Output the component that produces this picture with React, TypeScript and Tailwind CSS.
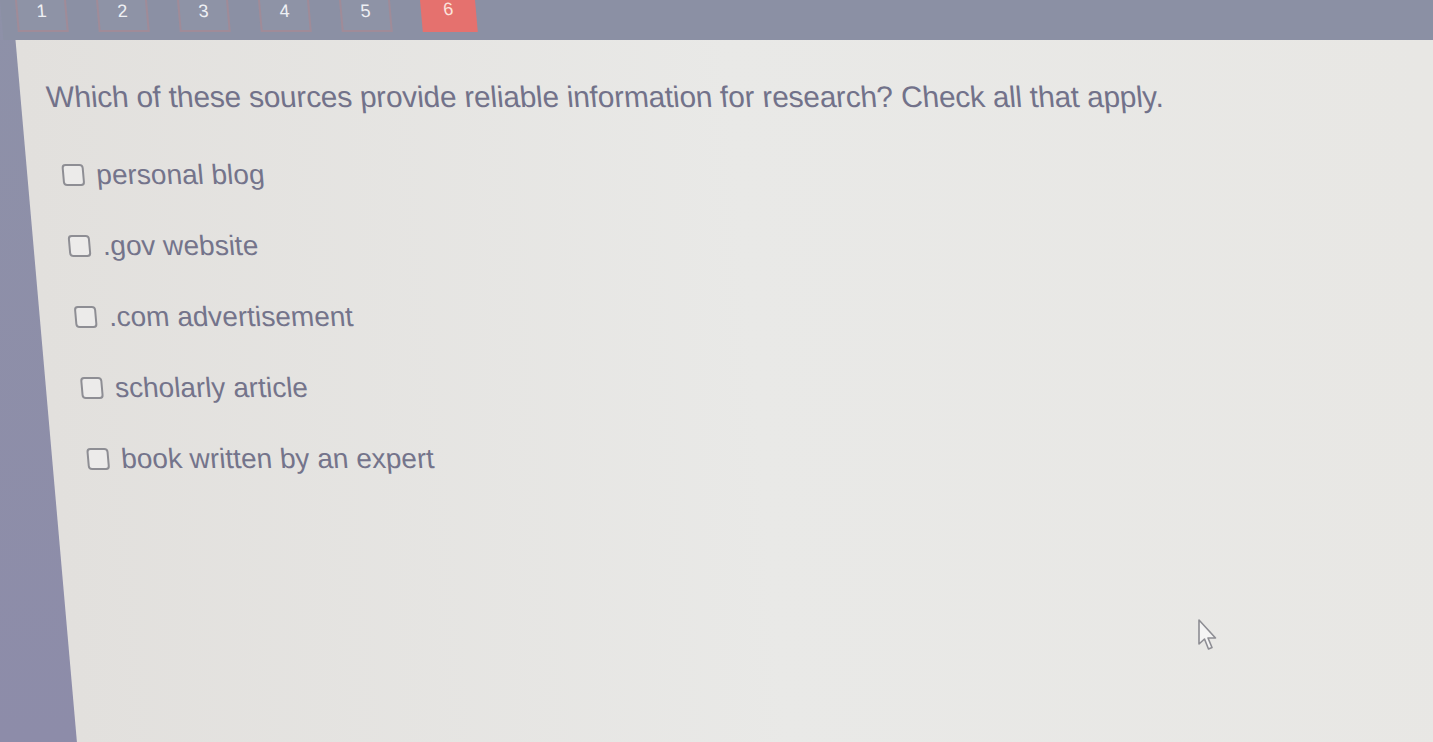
import React from "react";

const options = [
  "personal blog",
  ".gov website",
  ".com advertisement",
  "scholarly article",
  "book written by an expert",
];

function Cursor() {
  return (
    <svg width="22" height="34" viewBox="0 0 22 34" className="absolute left-[1196px] top-[618px]">
      <path
        d="M3 2 L3 26 L8.5 21 L12.5 31 L16 29.5 L12 20 L19.5 20 Z"
        fill="#f4f4f4"
        stroke="#8d8d93"
        strokeWidth="1.6"
        strokeLinejoin="round"
      />
    </svg>
  );
}

export default function App() {
  return (
    <div
      className="relative h-[742px] w-[1433px] overflow-hidden bg-gradient-to-b from-[#8e91a8] to-[#8d8ca9]"
      style={{ fontFamily: '"Liberation Sans", Arial, sans-serif' }}
    >
      <div className="flex h-full origin-top-left skew-x-[5deg] flex-col">
        <div className="flex h-[40px] shrink-0 items-start gap-[30px] bg-[#8b90a4] pl-[15px]">
          {[1, 2, 3, 4, 5].map((n) => (
            <div
              key={n}
              className="-mt-[12px] flex h-[44px] w-[51px] justify-center border-2 border-[#a08b98] bg-[#8e93a6] pt-[12px] text-[18px] leading-none text-[#eef0f4]"
            >
              {n}
            </div>
          ))}
          <div className="-mt-[12px] flex h-[44px] w-[55px] justify-center bg-[#e5716e] pt-[12px] text-[18px] leading-none text-[#fbe3dd]">
            6
          </div>
        </div>
        <div className="ml-[12px] flex-1 bg-gradient-to-r from-[#e2e0dd] via-[#e9e9e7] to-[#e8e7e4] pl-[26px] pt-[40px] text-[#72728a]">
          <p className="text-[29.8px] leading-[34px] tracking-[-0.2px]">
            Which of these sources provide reliable information for research? Check all that apply.
          </p>
          <div className="mt-[45px] flex flex-col gap-[40px] pl-[9px]">
            {options.map((o) => (
              <label key={o} className="flex h-[31px] items-center gap-[12px] text-[28px] leading-[31px] text-[#74748b]">
                <span className="h-[22px] w-[22px] shrink-0 rounded-[4px] border-2 border-[#8e8e94] bg-[#ecebea]" />
                {o}
              </label>
            ))}
          </div>
        </div>
      </div>
      <Cursor />
    </div>
  );
}
